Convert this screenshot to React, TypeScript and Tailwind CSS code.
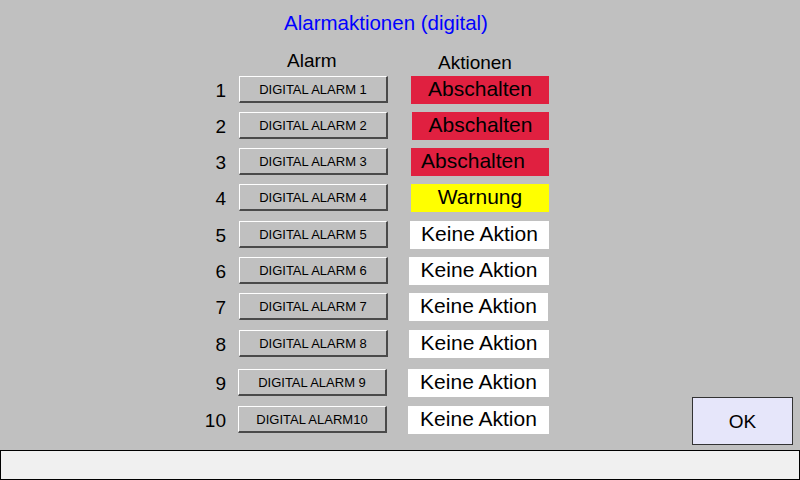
import React from "react";

type Row = {
  n: string;
  label: string;
  action: string;
  actionCls: string;
  rowCls: string;
  btnCls: string;
  textCls: string;
};

const rows: Row[] = [
  { n: "1", label: "DIGITAL ALARM 1", action: "Abschalten", actionCls: "bg-[#e02040] w-[138px]", rowCls: "mt-0", btnCls: "ml-[13px]", textCls: "" },
  { n: "2", label: "DIGITAL ALARM 2", action: "Abschalten", actionCls: "bg-[#e02040] w-[137px]", rowCls: "mt-[8px]", btnCls: "ml-[13px]", textCls: "" },
  { n: "3", label: "DIGITAL ALARM 3", action: "Abschalten", actionCls: "bg-[#e02040] w-[138px]", rowCls: "mt-[8px]", btnCls: "ml-[13px]", textCls: "pr-[14px]" },
  { n: "4", label: "DIGITAL ALARM 4", action: "Warnung", actionCls: "bg-[#ffff00] w-[138px]", rowCls: "mt-[8px]", btnCls: "ml-[13px]", textCls: "" },
  { n: "5", label: "DIGITAL ALARM 5", action: "Keine Aktion", actionCls: "bg-white w-[139px]", rowCls: "mt-[9px]", btnCls: "ml-[13px]", textCls: "" },
  { n: "6", label: "DIGITAL ALARM 6", action: "Keine Aktion", actionCls: "bg-white w-[140px]", rowCls: "mt-[8px]", btnCls: "ml-[13px]", textCls: "" },
  { n: "7", label: "DIGITAL ALARM 7", action: "Keine Aktion", actionCls: "bg-white w-[139px] mr-[1px]", rowCls: "mt-[8px]", btnCls: "ml-[13px]", textCls: "" },
  { n: "8", label: "DIGITAL ALARM 8", action: "Keine Aktion", actionCls: "bg-white w-[140px]", rowCls: "mt-[9px]", btnCls: "ml-[13px]", textCls: "" },
  { n: "9", label: "DIGITAL ALARM 9", action: "Keine Aktion", actionCls: "bg-white w-[141px]", rowCls: "mt-[11px]", btnCls: "ml-[12px]", textCls: "" },
  { n: "10", label: "DIGITAL ALARM10", action: "Keine Aktion", actionCls: "bg-white w-[141px]", rowCls: "mt-[9px]", btnCls: "ml-[12px]", textCls: "" },
];

export default function App() {
  return (
    <div
      className="w-[800px] h-[480px] bg-[#c0c0c0] flex flex-col overflow-hidden text-black"
      style={{ fontFamily: '"Liberation Sans", Arial, sans-serif' }}
    >
      <div className="h-[450px] flex flex-row">
        <div className="w-[549px] flex flex-col">
          <div className="mt-[13px] ml-[284px] text-[20.5px] leading-[20px] text-[#0000ff] whitespace-nowrap">
            Alarmaktionen (digital)
          </div>
          <div className="flex flex-row items-start mt-[19px] h-[24px] text-[19px] leading-[18px]">
            <div className="ml-[287px] w-[151px]">Alarm</div>
            <div className="mt-[2px]">Aktionen</div>
          </div>
          <div className="flex flex-col">
            {rows.map((r) => (
              <div key={r.n} className={`flex flex-row items-start h-[28px] ${r.rowCls}`}>
                <div className="w-[226px] h-[28px] flex items-center justify-end text-[19px] leading-[19px]">
                  {r.n}
                </div>
                <div
                  className={`${r.btnCls} w-[149px] h-[27px] bg-[#c0c0c0] border-t border-l border-white border-r-2 border-b-2 border-r-[#4a4a4a] border-b-[#4a4a4a] flex items-center justify-center text-[13px] leading-[13px] text-black whitespace-nowrap`}
                >
                  {r.label}
                </div>
                <div
                  className={`ml-auto h-[28px] flex items-center justify-center pb-[3px] text-[21px] leading-[21px] whitespace-nowrap ${r.actionCls} ${r.textCls}`}
                >
                  {r.action}
                </div>
              </div>
            ))}
          </div>
        </div>
        <div className="flex-1 flex flex-col justify-end items-end pr-[7px] pb-[5px]">
          <div className="w-[101px] h-[48px] bg-[#e6e6fa] border border-[#333] flex items-center justify-center text-[19px] leading-[19px]">
            OK
          </div>
        </div>
      </div>
      <div className="h-[30px] bg-[#f0f0f0] border border-black" />
    </div>
  );
}
